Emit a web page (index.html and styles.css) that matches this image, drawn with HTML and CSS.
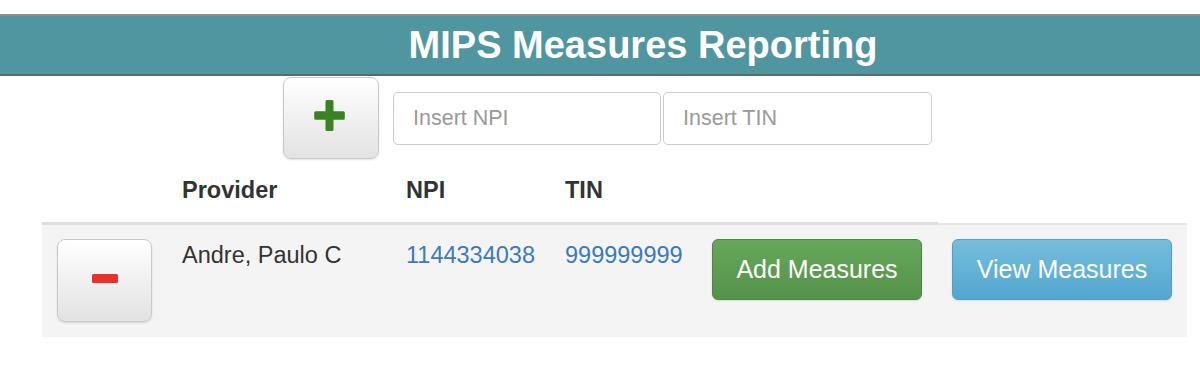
FILE: index.html
```html
<!DOCTYPE html>
<html lang="en">
<head>
<meta charset="utf-8">
<title>MIPS Measures Reporting</title>
<link rel="stylesheet" href="styles.css">
</head>
<body>
<header class="title-bar">
  <h1 class="title">MIPS Measures Reporting</h1>
</header>
<div class="controls">
  <button class="icon-btn add-btn" type="button" aria-label="Add provider">
    <svg width="31" height="31" viewBox="0 0 31 31"><path d="M11.5 1.5 a1.5 1.5 0 0 1 1.5 -1.5 h5 a1.5 1.5 0 0 1 1.5 1.5 v9.8 h9.8 a1.5 1.5 0 0 1 1.5 1.5 v5.4 a1.5 1.5 0 0 1 -1.5 1.5 h-9.8 v9.8 a1.5 1.5 0 0 1 -1.5 1.5 h-5 a1.5 1.5 0 0 1 -1.5 -1.5 v-9.8 h-9.8 a1.5 1.5 0 0 1 -1.5 -1.5 v-5.4 a1.5 1.5 0 0 1 1.5 -1.5 h9.8 z" fill="#3b8126"/></svg>
  </button>
  <input class="field" type="text" placeholder="Insert NPI">
  <input class="field field-tin" type="text" placeholder="Insert TIN">
</div>
<div class="table">
  <div class="th"></div>
  <div class="th">Provider</div>
  <div class="th">NPI</div>
  <div class="th">TIN</div>
  <div class="th"></div>
  <div class="th th-last"></div>

  <div class="td td-first">
    <button class="icon-btn remove-btn" type="button" aria-label="Remove provider"><span class="minus"></span></button>
  </div>
  <div class="td">Andre, Paulo C</div>
  <div class="td"><a class="link" href="#">1144334038</a></div>
  <div class="td"><a class="link" href="#">999999999</a></div>
  <div class="td td-btn"><button class="btn btn-green" type="button">Add Measures</button></div>
  <div class="td td-btn td-last"><button class="btn btn-blue" type="button">View Measures</button></div>
</div>
</body>
</html>
```
FILE: styles.css
```css
html, body {
  margin: 0;
  padding: 0;
  background: #ffffff;
  font-family: "Liberation Sans", Arial, Helvetica, sans-serif;
  color: #333333;
}

.title-bar {
  margin-top: 14px;
  border-top: 2px solid #8c8f90;
  border-bottom: 2px solid #5b6b6d;
  background: #5096a0;
  height: 58px;
}

.title {
  margin: 0;
  padding-left: 86px;
  text-align: center;
  font-size: 38px;
  line-height: 58px;
  font-weight: bold;
  color: #ffffff;
}

.controls {
  display: flex;
  align-items: flex-start;
  margin-top: 1px;
  padding-left: 283px;
}

.icon-btn {
  display: flex;
  align-items: center;
  justify-content: center;
  padding: 0;
  border: 1px solid #c9c9c9;
  border-radius: 8px;
  background: linear-gradient(#ffffff, #e2e2e2);
  box-shadow: 0 1px 2px rgba(0, 0, 0, 0.12);
  cursor: pointer;
}

.add-btn {
  width: 96px;
  height: 82px;
  margin-right: 14px;
}

.add-btn svg {
  margin-top: -5px;
  margin-left: -4px;
}

.field {
  box-sizing: border-box;
  width: 268px;
  height: 53px;
  margin-top: 15px;
  padding: 0 19px;
  border: 1.5px solid #cccccc;
  border-radius: 5px;
  background: #ffffff;
  font-family: "Liberation Sans", Arial, Helvetica, sans-serif;
  font-size: 21.5px;
  color: #555555;
  outline: none;
}

.field::placeholder {
  color: #999999;
}

.field-tin {
  width: 269px;
  margin-left: 2px;
}

.table {
  display: grid;
  grid-template-columns: 128px 224px 159px 147px 238px 249px;
  width: 1145px;
  margin: 14px 0 0 42px;
}

.th {
  padding: 0 12px 15px;
  font-size: 23.5px;
  line-height: 34px;
  font-weight: bold;
  color: #333333;
  border-bottom: 3px solid #dedede;
}

.th-last {
  border-bottom: 2px solid #e6e6e6;
  padding-bottom: 16px;
}

.td {
  padding: 13px 12px 0;
  background: #f4f4f4;
  font-size: 23.5px;
  line-height: 34px;
  color: #333333;
}

.td-first {
  padding: 14px 0 15px 15px;
}

.td-btn {
  padding-top: 14px;
}

.td-last {
  padding-left: 14px;
}

.remove-btn {
  width: 95px;
  height: 83px;
}

.minus {
  display: block;
  width: 26px;
  height: 9px;
  margin-top: -4px;
  border-radius: 1.5px;
  background: #e8312a;
}

.link {
  color: #3c79bd;
  text-decoration: none;
}

.btn {
  height: 61px;
  padding: 0;
  border-radius: 6px;
  font-family: "Liberation Sans", Arial, Helvetica, sans-serif;
  font-size: 25px;
  color: #ffffff;
  cursor: pointer;
  box-shadow: 0 1px 2px rgba(0, 0, 0, 0.1);
}

.btn-green {
  width: 210px;
  border: 1px solid #4b8741;
  background: linear-gradient(#66a85b, #55924a);
}

.btn-blue {
  width: 220px;
  border: 1px solid #4e9fc9;
  background: linear-gradient(#75bedc, #53a6cf);
}
```
